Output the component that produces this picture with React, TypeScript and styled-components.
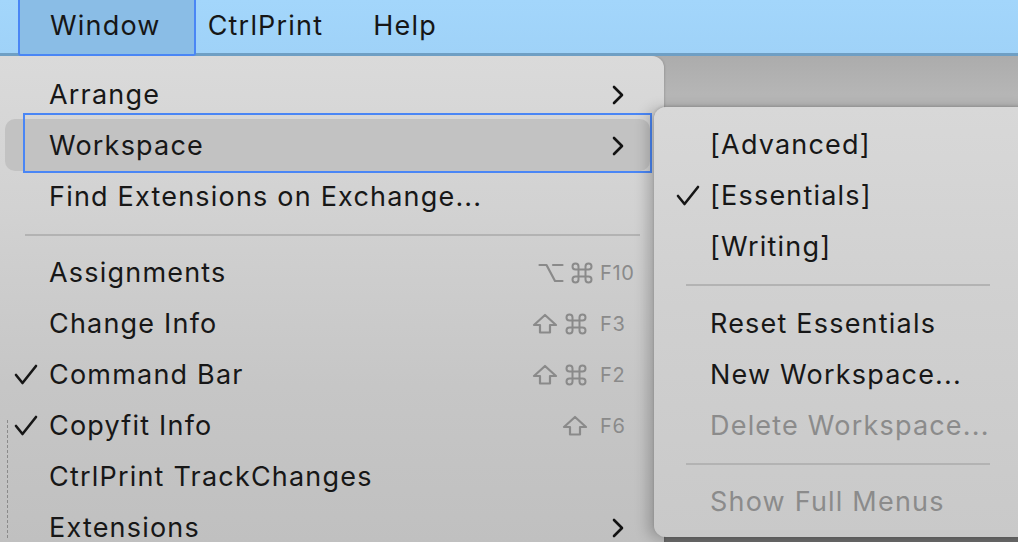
import React from "react";
import styled, { createGlobalStyle } from "styled-components";

const Global = createGlobalStyle`
  html, body { margin: 0; padding: 0; }
  body { width: 1018px; height: 542px; overflow: hidden; font-family: Inter, "Liberation Sans", sans-serif; }
`;

const Page = styled.div`
  width: 1018px;
  height: 542px;
  display: flex;
  flex-direction: column;
  overflow: hidden;
`;

const MenuBar = styled.div`
  height: 53px;
  flex: none;
  display: flex;
  align-items: stretch;
  padding-left: 18px;
  background: linear-gradient(to bottom, #a3d6fb, #9fd2f8);
  border-bottom: 3px solid #6f9fc4;
  position: relative;
  z-index: 2;
`;

const BarItem = styled.div<{ $active?: boolean; $pl: number; $pr: number }>`
  display: flex;
  align-items: center;
  padding: 0 ${(p) => p.$pr}px 2px ${(p) => p.$pl}px;
  font-size: 27px;
  line-height: 30px;
  color: #161616;
  letter-spacing: 1.2px;
  box-sizing: border-box;
  ${(p) =>
    p.$active
      ? `
    background: #8abde6;
    border: 2.5px solid #4a86f5;
    border-top: none;
    margin-bottom: -3px;
    border-radius: 0 0 3px 3px;
  `
      : ``}
`;

const Stage = styled.div`
  flex: 1;
  position: relative;
  display: flex;
  background: linear-gradient(to bottom, #acacac 0px, #b6b6b6 40px, #bababa 470px, #6c6c6c 481px);
`;

const MainMenu = styled.div`
  width: 664px;
  flex: none;
  box-sizing: border-box;
  padding-top: 13px;
  border-top-right-radius: 12px;
  background: linear-gradient(to bottom, #dadada 0px, #d2d2d2 150px, #c6c6c6 330px, #c0c0c0 486px);
  box-shadow: 1px 0 2px rgba(0, 0, 0, 0.12);
`;

const Row = styled.div<{ $disabled?: boolean }>`
  height: 51px;
  display: flex;
  align-items: center;
  position: relative;
  font-size: 27px;
  line-height: 28px;
  letter-spacing: 1.2px;
  color: ${(p) => (p.$disabled ? "#8b8b8b" : "#171717")};
`;

const MainRow = styled(Row)`
  padding-left: 49px;
  padding-right: 40px;
`;

const SubRow = styled(Row)`
  padding-left: 56px;
`;

const Highlight = styled.div`
  position: absolute;
  left: 5px;
  right: 14px;
  top: -1px;
  bottom: 0px;
  border-radius: 10px;
  background: #c2c2c2;
  &::after {
    content: "";
    position: absolute;
    left: 18px;
    right: -2px;
    top: -6px;
    bottom: -2px;
    border: 2.5px solid #4a86f5;
  }
`;

const Label = styled.span`
  position: relative;
  flex: 1;
  white-space: nowrap;
`;

const Check = styled.svg<{ $left: number }>`
  position: absolute;
  left: ${(p) => p.$left}px;
  top: 15px;
`;

const Chevron = styled.svg`
  position: relative;
  flex: none;
`;

const Shortcut = styled.span`
  position: relative;
  display: flex;
  align-items: center;
  gap: 6px;
  color: #8a8a8a;
  font-size: 20px;
  line-height: 22px;
  letter-spacing: 0.6px;
  white-space: nowrap;
  margin-right: -10px;
`;

const KeyIcon = styled.svg`
  flex: none;
  display: block;
`;

const Key = styled.span<{ $gap: number }>`
  width: 34px;
  margin-left: ${(p) => p.$gap}px;
  text-align: left;
`;

const Separator = styled.div<{ $l: number; $r: number; $h: number }>`
  height: ${(p) => p.$h}px;
  display: flex;
  align-items: center;
  padding: 0 ${(p) => p.$r}px 0 ${(p) => p.$l}px;
  &::before {
    content: "";
    flex: 1;
    height: 2px;
    background: #b3b3b3;
  }
`;

const SubMenu = styled.div`
  position: absolute;
  left: 654px;
  top: 51px;
  width: 380px;
  height: 430px;
  box-sizing: border-box;
  padding-top: 12px;
  border-radius: 12px;
  background: linear-gradient(to bottom, #d8d8d8 0px, #d0d0d0 200px, #c9c9c9 430px);
  box-shadow: -6px 2px 14px rgba(0, 0, 0, 0.22), 0 -1px 3px rgba(0, 0, 0, 0.15);
`;

const DashedGuide = styled.div`
  position: absolute;
  left: 7px;
  top: 364px;
  height: 118px;
  border-left: 1px dashed #8a8a8a;
`;

const CheckMark = ({ left }: { left: number }) => (
  <Check $left={left} width="24" height="22" viewBox="0 0 24 22">
    <path d="M2 11 L8.5 19 L22 2" fill="none" stroke="#161616" strokeWidth="2.6" strokeLinecap="round" strokeLinejoin="round" />
  </Check>
);

const Arrow = () => (
  <Chevron width="12" height="22" viewBox="0 0 12 22">
    <path d="M2 3 L10 11 L2 19" fill="none" stroke="#121212" strokeWidth="2.6" strokeLinecap="round" strokeLinejoin="round" />
  </Chevron>
);

const stroke = { fill: "none", stroke: "#8a8a8a", strokeWidth: 2.2, strokeLinejoin: "round" as const, strokeLinecap: "round" as const };

const OptionKey = () => (
  <KeyIcon width="26" height="22" viewBox="0 0 26 22">
    <path d="M1.5 3 H8.5 L17 19 H24.5" {...stroke} />
    <path d="M15 3 H24.5" {...stroke} />
  </KeyIcon>
);

const CommandKey = () => (
  <KeyIcon width="24" height="22" viewBox="0 0 24 22">
    <path
      d="M8.5 7.5 V14.5 M15.5 7.5 V14.5 M8.5 7.5 H15.5 M8.5 14.5 H15.5 M8.5 7.5 H5.5 A3 3 0 1 1 8.5 4.5 Z M15.5 7.5 V4.5 A3 3 0 1 1 18.5 7.5 Z M15.5 14.5 H18.5 A3 3 0 1 1 15.5 17.5 Z M8.5 14.5 V17.5 A3 3 0 1 1 5.5 14.5 Z"
      {...stroke}
      strokeWidth={2}
    />
  </KeyIcon>
);

const ShiftKey = () => (
  <KeyIcon width="26" height="22" viewBox="0 0 26 22">
    <path d="M13 2 L24 12 H18 V19.5 H8 V12 H2 Z" {...stroke} />
  </KeyIcon>
);

const keyIcons: Record<string, () => React.ReactElement> = {
  opt: OptionKey,
  cmd: CommandKey,
  shift: ShiftKey,
};

type Item =
  | { sep: true }
  | { sep?: false; label: string; checked?: boolean; sub?: boolean; active?: boolean; keys?: string[]; fkey?: string; disabled?: boolean };

const mainItems: Item[] = [
  { label: "Arrange", sub: true },
  { label: "Workspace", sub: true, active: true },
  { label: "Find Extensions on Exchange..." },
  { sep: true },
  { label: "Assignments", keys: ["opt", "cmd"], fkey: "F10" },
  { label: "Change Info", keys: ["shift", "cmd"], fkey: "F3" },
  { label: "Command Bar", checked: true, keys: ["shift", "cmd"], fkey: "F2" },
  { label: "Copyfit Info", checked: true, keys: ["shift"], fkey: "F6" },
  { label: "CtrlPrint TrackChanges" },
  { label: "Extensions", sub: true },
];

const subItems: Item[] = [
  { label: "[Advanced]" },
  { label: "[Essentials]", checked: true },
  { label: "[Writing]" },
  { sep: true },
  { label: "Reset Essentials" },
  { label: "New Workspace..." },
  { label: "Delete Workspace...", disabled: true },
  { sep: true },
  { label: "Show Full Menus", disabled: true },
];

export default function App() {
  return (
    <Page>
      <Global />
      <MenuBar>
        <BarItem $active $pl={30} $pr={33}>Window</BarItem>
        <BarItem $pl={12} $pr={26}>CtrlPrint</BarItem>
        <BarItem $pl={24} $pr={0}>Help</BarItem>
      </MenuBar>
      <Stage>
        <MainMenu>
          {mainItems.map((it, i) =>
            it.sep ? (
              <Separator key={i} $h={25} $l={25} $r={24} />
            ) : (
              <MainRow key={i}>
                {it.active && <Highlight />}
                {it.checked && <CheckMark left={14} />}
                <Label>{it.label}</Label>
                {it.keys && (
                  <Shortcut>
                    {it.keys.map((k, j) => {
                      const Icon = keyIcons[k];
                      return <Icon key={j} />;
                    })}
                    <Key $gap={it.fkey === "F10" ? 0 : 6}>{it.fkey}</Key>
                  </Shortcut>
                )}
                {it.sub && <Arrow />}
              </MainRow>
            )
          )}
        </MainMenu>
        <DashedGuide />
        <SubMenu>
          {subItems.map((it, i) =>
            it.sep ? (
              <Separator key={i} $h={i === 3 ? 26 : 25} $l={32} $r={44} />
            ) : (
              <SubRow key={i} $disabled={it.disabled}>
                {it.checked && <CheckMark left={22} />}
                <Label>{it.label}</Label>
              </SubRow>
            )
          )}
        </SubMenu>
      </Stage>
    </Page>
  );
}
